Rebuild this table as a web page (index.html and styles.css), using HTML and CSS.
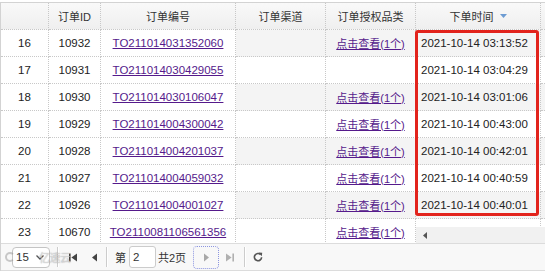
FILE: index.html
```html
<!DOCTYPE html>
<html lang="zh">
<head>
<meta charset="utf-8">
<title>订单列表</title>
<link rel="stylesheet" href="styles.css">
</head>
<body>
<div class="grid">
  <div class="view">
    <div class="row head">
      <div class="cell"></div>
      <div class="cell">订单ID</div>
      <div class="cell">订单编号</div>
      <div class="cell">订单渠道</div>
      <div class="cell">订单授权品类</div>
      <div class="cell">下单时间<svg class="sort" width="7" height="4" viewBox="0 0 7 4"><path d="M0 0H7L3.5 4Z"/></svg></div>
      <div class="cell fill"></div>
    </div>
    <div class="body">
      <div class="row alt">
        <div class="cell">16</div><div class="cell">10932</div>
        <div class="cell"><a href="#">TO211014031352060</a></div>
        <div class="cell s"></div><div class="cell s cat"><a href="#">点击查看(1个)</a></div>
        <div class="cell s time">2021-10-14 03:13:52</div><div class="cell s fill"></div>
      </div>
      <div class="row">
        <div class="cell">17</div><div class="cell">10931</div>
        <div class="cell"><a href="#">TO211014030429055</a></div>
        <div class="cell s"></div><div class="cell s cat"></div>
        <div class="cell s time">2021-10-14 03:04:29</div><div class="cell s fill"></div>
      </div>
      <div class="row alt">
        <div class="cell">18</div><div class="cell">10930</div>
        <div class="cell"><a href="#">TO211014030106047</a></div>
        <div class="cell s"></div><div class="cell s cat"><a href="#">点击查看(1个)</a></div>
        <div class="cell s time">2021-10-14 03:01:06</div><div class="cell s fill"></div>
      </div>
      <div class="row">
        <div class="cell">19</div><div class="cell">10929</div>
        <div class="cell"><a href="#">TO211014004300042</a></div>
        <div class="cell s"></div><div class="cell s cat"><a href="#">点击查看(1个)</a></div>
        <div class="cell s time">2021-10-14 00:43:00</div><div class="cell s fill"></div>
      </div>
      <div class="row alt">
        <div class="cell">20</div><div class="cell">10928</div>
        <div class="cell"><a href="#">TO211014004201037</a></div>
        <div class="cell s"></div><div class="cell s cat"><a href="#">点击查看(1个)</a></div>
        <div class="cell s time">2021-10-14 00:42:01</div><div class="cell s fill"></div>
      </div>
      <div class="row">
        <div class="cell">21</div><div class="cell">10927</div>
        <div class="cell"><a href="#">TO211014004059032</a></div>
        <div class="cell s"></div><div class="cell s cat"><a href="#">点击查看(1个)</a></div>
        <div class="cell s time">2021-10-14 00:40:59</div><div class="cell s fill"></div>
      </div>
      <div class="row alt">
        <div class="cell">22</div><div class="cell">10926</div>
        <div class="cell"><a href="#">TO211014004001027</a></div>
        <div class="cell s"></div><div class="cell s cat"><a href="#">点击查看(1个)</a></div>
        <div class="cell s time">2021-10-14 00:40:01</div><div class="cell s fill"></div>
      </div>
      <div class="row">
        <div class="cell">23</div><div class="cell">10670</div>
        <div class="cell"><a href="#">TO2110081106561356</a></div>
        <div class="cell s"></div><div class="cell s cat"><a href="#">点击查看(1个)</a></div>
        <div class="cell s time"></div><div class="cell s fill"></div>
      </div>
      <div class="hscroll"><svg width="4" height="7" viewBox="0 0 4 7"><path d="M4 0V7L0 3.5Z"/></svg></div>
    </div>
    <div class="highlight"></div>
  </div>
  <div class="pager">
    <div class="sel"><span>15</span><svg width="8" height="5" viewBox="0 0 8 5"><path d="M0.5 0.5L4 4L7.5 0.5" fill="none" stroke="#555" stroke-width="1.3"/></svg></div>
    <span class="sep"></span>
    <span class="pbtn first"><svg width="8" height="9" viewBox="0 0 8 9"><rect x="0" y="0.5" width="1.6" height="8"/><path d="M8 0.5V8.5L2.4 4.5Z"/></svg></span>
    <span class="pbtn prev"><svg width="5" height="9" viewBox="0 0 5 9"><path d="M5 0.5V8.5L0 4.5Z"/></svg></span>
    <span class="sep"></span>
    <span class="lbl">第</span>
    <span class="num">2</span>
    <span class="lbl">共2页</span>
    <span class="pbtn next"><svg width="5" height="9" viewBox="0 0 5 9"><path d="M0 0.5V8.5L5 4.5Z"/></svg></span>
    <span class="pbtn last"><svg width="8" height="9" viewBox="0 0 8 9"><path d="M0 0.5V8.5L5.6 4.5Z"/><rect x="6.4" y="0.5" width="1.6" height="8"/></svg></span>
    <span class="sep"></span>
    <span class="pbtn reload"><svg width="10" height="10" viewBox="0 0 10 10"><path d="M7.6 2.6A3.6 3.6 0 1 0 8.6 5.2" fill="none" stroke="#555" stroke-width="1.6"/><path d="M5.6 0.6L9.2 0.8L8.8 4.2Z" fill="#555"/></svg></span>
    <span class="wm"><span class="wm-logo"></span>亿速云</span>
  </div>
</div>
</body>
</html>
```

FILE: styles.css
```css
* { box-sizing: border-box; }
body {
  margin: 0;
  background: #fff;
  font-family: "Liberation Sans", "Noto Sans CJK SC", sans-serif;
  font-size: 11.5px;
  color: #222;
}
.grid {
  margin-top: 2px;
  width: 545px;
  border-top: 1px solid #d3d3d3;
  border-left: 1px solid #d3d3d3;
}
.view { position: relative; }
.row {
  display: grid;
  grid-template-columns: 48px 52px 135px 90px 90px 125px 1fr;
  height: 27px;
}
.cell {
  display: flex;
  align-items: center;
  justify-content: center;
  border-right: 1px dotted #c8c8c8;
  border-bottom: 1px dotted #c8c8c8;
  white-space: nowrap;
  overflow: hidden;
}
.cell.fill { border-right: none; }
.head .cell {
  background: linear-gradient(#f9f9f9, #efefef);
  font-size: 11px;
  color: #333;
}
.sort { margin-left: 6px; fill: #6c9bd2; }
.body {
  position: relative;
  height: 213px;
  overflow: hidden;
}
.row.alt .cell.s { background: #f4f4f4; }
.cell.time { justify-content: flex-start; padding-left: 5px; }
a { color: #551a8b; text-decoration: underline; }
.cat a { font-size: 11px; }
.hscroll {
  position: absolute;
  left: 415px;
  right: 0;
  top: 197px;
  height: 16px;
  background: #f1f1f1;
  display: flex;
  align-items: center;
  padding-left: 7px;
  fill: #555;
}
.highlight {
  position: absolute;
  left: 414px;
  top: 27px;
  width: 124px;
  height: 186px;
  border: 3px solid #e2231c;
  border-radius: 3px;
}
.pager {
  position: relative;
  height: 28px;
  border-top: 1px solid #dcdcdc;
  border-bottom: 1px solid #dcdcdc;
  background: #f8f8f8;
  display: flex;
  align-items: center;
  padding-left: 11px;
  font-size: 11px;
  color: #333;
}
.sel {
  width: 38px;
  height: 21px;
  border: 1px solid #c4c4c4;
  border-radius: 4px;
  background: #fff;
  display: flex;
  align-items: center;
  justify-content: space-between;
  padding: 0 5px 0 3px;
  font-size: 11.5px;
}
.sep {
  width: 2px;
  height: 20px;
  border-left: 1px solid #ccc;
  border-right: 1px solid #fff;
}
.pager .sel + .sep { margin-left: 7px; }
.pbtn {
  width: 22px;
  height: 23px;
  display: flex;
  align-items: center;
  justify-content: center;
  fill: #444;
}
.first { margin-left: 3px; }
.prev { margin-left: -1px; }
.prev + .sep { margin-left: 1px; }
.lbl { margin-left: 7px; }
.num {
  margin-left: 3px;
  width: 27px;
  height: 22px;
  border: 1px solid #ccc;
  border-radius: 3px;
  background: #fff;
  display: flex;
  align-items: center;
  padding-left: 3px;
  font-size: 11.5px;
}
.num + .lbl { margin-left: 2px; }
.next {
  margin-left: 7px;
  width: 26px;
  border: 1px dotted #8c95e0;
  border-radius: 4px;
  fill: #a8a8a8;
}
.last { fill: #b0b0b0; }
.last + .sep { margin-left: 3px; }
.reload { margin-left: 1px; }
.wm {
  position: absolute;
  left: 4px;
  top: 5px;
  display: flex;
  align-items: center;
  gap: 24px;
  font-size: 11px;
  letter-spacing: -0.5px;
  color: rgba(255, 255, 255, 0.55);
  text-shadow: 0 0 1px rgba(60, 60, 60, 0.55);
}
.wm-logo {
  width: 10px;
  height: 10px;
  border: 2px solid rgba(140, 140, 140, 0.45);
  border-right-color: transparent;
  border-radius: 50%;
}
```
